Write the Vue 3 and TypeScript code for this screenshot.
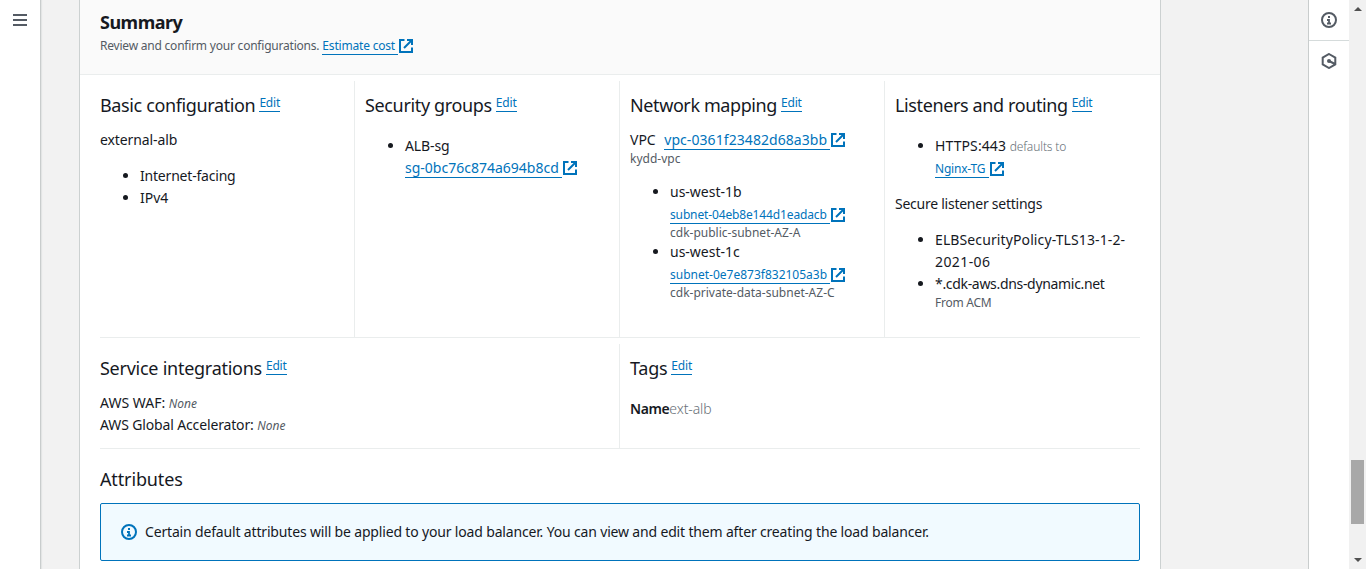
<script setup lang="ts">
import { defineComponent, h } from 'vue'

interface Subnet {
  zone: string
  id: string
  name: string
}

const subnets: Subnet[] = [
  { zone: 'us-west-1b', id: 'subnet-04eb8e144d1eadacb', name: 'cdk-public-subnet-AZ-A' },
  { zone: 'us-west-1c', id: 'subnet-0e7e873f832105a3b', name: 'cdk-private-data-subnet-AZ-C' },
]

const ExternalIcon = defineComponent({
  render: () =>
    h('svg', { width: 14, height: 14, viewBox: '0 0 14 14', fill: 'none', stroke: '#0073bb', 'stroke-width': 2 }, [
      h('path', { d: 'M5.5 1H1v12h12V8.5' }),
      h('path', { d: 'M8 1h5v5M13 1L5 9' }),
    ]),
})
</script>

<template>
  <div class="page">
    <nav class="left-rail">
      <svg class="menu-icon" width="14" height="12" viewBox="0 0 14 12" fill="#545b64">
        <path d="M0 0h14v2H0zM0 5h14v2H0zM0 10h14v2H0z" />
      </svg>
    </nav>

    <main class="content">
      <section class="card">
        <header class="card-head">
          <h2>Summary</h2>
          <div class="row desc">
            <span class="small review">Review and confirm your configurations.</span>
            <a class="link small estimate">Estimate cost</a><ExternalIcon />
          </div>
        </header>

        <div class="grid top">
          <div class="cell">
            <h3><span class="basic">Basic configuration</span><a class="edit">Edit</a></h3>
            <p class="name">external-alb</p>
            <ul>
              <li class="facing">Internet-facing</li>
              <li>IPv4</li>
            </ul>
          </div>
          <div class="cell">
            <h3><span class="groups">Security groups</span><a class="edit">Edit</a></h3>
            <ul class="tight">
              <li>
                <span class="name">ALB-sg</span>
                <div class="row"><a class="link sg">sg-0bc76c874a694b8cd</a><ExternalIcon /></div>
              </li>
            </ul>
          </div>
          <div class="cell">
            <h3><span class="network">Network mapping</span><a class="edit">Edit</a></h3>
            <div class="row vpc"><span>VPC</span><a class="link vpc-id">vpc-0361f23482d68a3bb</a><ExternalIcon /></div>
            <div class="note">kydd-vpc</div>
            <ul>
              <li v-for="s in subnets" :key="s.id">
                {{ s.zone }}
                <div class="row lower"><a class="link small subnet">{{ s.id }}</a><ExternalIcon /></div>
                <div class="note">{{ s.name }}</div>
              </li>
            </ul>
          </div>
          <div class="cell">
            <h3><span class="listeners">Listeners and routing</span><a class="edit">Edit</a></h3>
            <ul class="tight">
              <li>
                <span class="https">HTTPS:443</span> <span class="light small defaults">defaults to</span>
                <div class="row lower"><a class="link small tg">Nginx-TG</a><ExternalIcon /></div>
              </li>
            </ul>
            <p class="secure">Secure listener settings</p>
            <ul>
              <li><span class="policy">ELBSecurityPolicy-TLS13-1-2-</span><br /><span class="policy-date">2021-06</span></li>
              <li>
                <span class="domain">*.cdk-aws.dns-dynamic.net</span>
                <div class="note acm">From ACM</div>
              </li>
            </ul>
          </div>
        </div>

        <div class="grid middle">
          <div class="cell">
            <h3><span class="services">Service integrations</span><a class="edit">Edit</a></h3>
            <p><span class="waf">AWS WAF:</span> <em>None</em></p>
            <p><span class="accelerator">AWS Global Accelerator:</span> <em>None</em></p>
          </div>
          <div class="cell">
            <h3><span class="tags">Tags</span><a class="edit">Edit</a></h3>
            <p class="tag"><b>Name</b><span class="light">ext-alb</span></p>
          </div>
        </div>

        <h3 class="attributes">Attributes</h3>
        <div class="alert">
          <svg width="16" height="16" viewBox="0 0 16 16" fill="none" stroke="#0073bb" stroke-width="2">
            <circle cx="8" cy="8" r="7" />
            <path d="M7 5h2M6 8h2v3M6 11.5h4" stroke-width="1.8" />
          </svg>
          <span>Certain default attributes will be applied to your load balancer. You can view and edit them after creating the load balancer.</span>
        </div>
      </section>
    </main>

    <aside class="right-rail">
      <div class="tool">
        <svg width="16" height="16" viewBox="0 0 16 16" fill="none" stroke="#545b64" stroke-width="2">
          <circle cx="8" cy="8" r="7" />
          <path d="M7 5h2M6 8h2v3M6 11.5h4" stroke-width="1.8" />
        </svg>
      </div>
      <div class="tool">
        <svg width="16" height="16" viewBox="0 0 16 16" fill="none" stroke="#545b64" stroke-width="2">
          <path d="M8 1l6.3 3.6v6.8L8 15l-6.3-3.6V4.6zM8 8l6 3" />
          <circle cx="8" cy="8" r="2" fill="#545b64" stroke="none" />
        </svg>
      </div>
    </aside>

    <div class="scrollbar">
      <svg width="8" height="4" viewBox="0 0 8 4" fill="#505050"><path d="M4 0l4 4H0z" /></svg>
      <div class="thumb"></div>
      <svg class="down" width="8" height="4" viewBox="0 0 8 4" fill="#505050"><path d="M0 0h8L4 4z" /></svg>
    </div>
  </div>
</template>

<style>
body {
  margin: 0;
  overflow: hidden;
}
</style>

<style scoped>
.page {
  display: flex;
  width: 1366px;
  height: 569px;
  overflow: hidden;
  background: #f2f2f2;
  color: #16191f;
  font: 14px/22px 'Noto Sans', 'Open Sans', sans-serif;
  white-space: nowrap;
}
.left-rail {
  box-sizing: border-box;
  width: 41px;
  padding: 14px 0 0 13px;
  background: #fff;
  border-right: 1px solid #c9cdcd;
  box-shadow: 1px 0 1px #e3e5e5;
}
.menu-icon {
  display: block;
}
.content {
  flex: 1;
  padding: 0 147px 0 38px;
}
.card {
  box-sizing: border-box;
  width: 1082px;
  height: 569px;
  background: #fff;
  border: solid #ccd1d1;
  border-width: 0 1px;
  overflow: hidden;
}
.card-head {
  box-sizing: border-box;
  height: 75px;
  padding: 11px 20px 0;
  background: #fafafa;
  border-bottom: 1px solid #eaeded;
}
h2 {
  margin: 0 0 2px;
  font-size: 18px;
  line-height: 22px;
  font-weight: 700;
  letter-spacing: -0.5px;
}
h3 {
  display: flex;
  margin: 0;
  height: 22px;
  font-size: 18px;
  line-height: 22px;
  font-weight: 400;
}
p {
  margin: 0;
}
ul {
  margin: 14px 0 0;
  padding: 0 0 0 40px;
}
.row {
  display: flex;
  align-items: center;
  height: 22px;
}
.lower {
  margin: 1px 0 -1px;
}
.desc {
  color: #545b64;
}
.small,
.note,
em {
  font-size: 12px;
  line-height: 14px;
}
.note {
  height: 16px;
  line-height: 16px;
  color: #545b64;
}
em {
  color: #545b64;
}
.light {
  color: #687078;
  font-weight: 300;
}
.link,
.edit {
  color: #0073bb;
  border-bottom: 1px solid #0073bb;
}
.link {
  box-sizing: border-box;
  height: 19px;
  line-height: 18px;
  margin-right: 1px;
  padding-right: 3px;
}
.link.small {
  height: 18px;
  line-height: 17px;
}
.edit {
  height: 17px;
  margin-left: 4px;
  font-size: 12px;
  line-height: 17px;
  letter-spacing: -0.2px;
}
.grid {
  display: grid;
  margin: 0 10px;
  position: relative;
}
.top {
  grid-template-columns: repeat(4, 265px);
  height: 263px;
}
.middle {
  grid-template-columns: 530px 530px;
  height: 111px;
}
.grid::after {
  content: '';
  position: absolute;
  left: 10px;
  right: 10px;
  bottom: 0;
  height: 1px;
  background: #eaeded;
}
.cell {
  box-sizing: border-box;
  margin: 6px 0 1px;
  padding: 13px 0 0 10px;
  border-right: 1px solid #eaeded;
}
.cell:last-child {
  border-right-color: transparent;
}
.cell h3 {
  margin-bottom: 13px;
}
.cell .tight {
  margin-top: 19px;
}
.review {
  letter-spacing: -0.215px;
}
.estimate {
  margin-left: 3px;
  letter-spacing: -0.19px;
}
.basic {
  letter-spacing: -0.37px;
}
.groups {
  letter-spacing: -0.35px;
}
.network {
  letter-spacing: -0.4px;
}
.listeners {
  letter-spacing: -0.38px;
}
.services {
  letter-spacing: -0.26px;
}
.tags {
  letter-spacing: -0.25px;
}
.name {
  letter-spacing: -0.1px;
}
.facing {
  letter-spacing: -0.2px;
}
.vpc-id {
  letter-spacing: 0.07px;
}
.vpc span {
  margin-right: 8.5px;
}
li:first-child .subnet {
  letter-spacing: -0.14px;
}
.https {
  letter-spacing: 0.1px;
}
.defaults {
  letter-spacing: -0.12px;
}
.tg {
  padding-right: 4px;
  letter-spacing: -0.2px;
}
.secure {
  margin-top: 14px;
  letter-spacing: -0.25px;
}
.policy {
  letter-spacing: 0.11px;
}
.policy-date {
  letter-spacing: 0.4px;
}
.domain {
  letter-spacing: -0.32px;
}
.acm {
  letter-spacing: -0.25px;
}
.accelerator {
  letter-spacing: -0.14px;
}
.tag {
  margin-top: 19px;
}
.tag b {
  font-weight: 600;
  letter-spacing: -0.4px;
}
.tag .light {
  letter-spacing: -0.1px;
}
.attributes {
  margin: 19px 20px 13px;
  letter-spacing: -0.13px;
}
.alert {
  box-sizing: border-box;
  display: flex;
  align-items: center;
  gap: 8px;
  height: 58px;
  margin: 0 20px;
  padding-left: 20px;
  background: #f1faff;
  border: 1px solid #0073bb;
  border-radius: 2px;
  letter-spacing: -0.166px;
}
.right-rail {
  box-sizing: border-box;
  width: 41px;
  background: #fff;
  border-left: 1px solid #c9cdcd;
}
.tool {
  box-sizing: border-box;
  display: flex;
  align-items: center;
  justify-content: center;
  height: 41px;
}
.tool:first-child {
  border-bottom: 1px solid #d5dbdb;
}
.tool:last-child {
  height: 40px;
}
.scrollbar {
  display: flex;
  flex-direction: column;
  align-items: center;
  width: 17px;
  padding-top: 7px;
  background: #f1f1f1;
}
.thumb {
  width: 13px;
  height: 64px;
  margin-top: 449px;
  background: #a8a8a8;
}
.down {
  margin-top: 34px;
}
</style>
